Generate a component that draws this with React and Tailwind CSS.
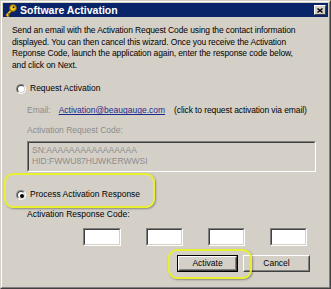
import React from "react";

const font = { fontFamily: '"Liberation Sans", Arial, sans-serif' };

function Radio({ checked }) {
  return (
    <span className="relative inline-block w-[10px] h-[10px] rounded-full bg-white border border-t-[#808080] border-l-[#808080] border-r-[#ffffff] border-b-[#ffffff] shrink-0">
      <span className="absolute inset-0 rounded-full border border-t-[#404040] border-l-[#404040] border-r-[#d4d0c8] border-b-[#d4d0c8]" />
      {checked && (
        <span className="absolute left-[3px] top-[3px] w-[4px] h-[4px] rounded-full bg-black" />
      )}
    </span>
  );
}

function Sunken({ className = "", children }) {
  return (
    <div className={"border border-t-[#808080] border-l-[#808080] border-r-white border-b-white " + className}>
      <div className="w-full h-full border border-t-[#404040] border-l-[#404040] border-r-[#d4d0c8] border-b-[#d4d0c8]">
        {children}
      </div>
    </div>
  );
}

function Button({ children, def, className = "" }) {
  const inner = (
    <div className="w-full h-full border border-t-white border-l-white border-r-[#404040] border-b-[#404040]">
      <div className="w-full h-full border border-t-[#d4d0c8] border-l-[#d4d0c8] border-r-[#808080] border-b-[#808080] flex items-center justify-center text-[8.5px] text-black">
        {children}
      </div>
    </div>
  );
  return def ? (
    <div className={"border border-black " + className}>{inner}</div>
  ) : (
    <div className={className}>{inner}</div>
  );
}

function KeyIcon() {
  return (
    <svg width="12" height="13" viewBox="0 0 12 13">
      <path d="M3 12 L2 11 L6 6.5" stroke="#7a5a00" strokeWidth="2.6" fill="none" strokeLinecap="round" />
      <path d="M3 12 L2 11 L6 6.5" stroke="#f2c21c" strokeWidth="1.4" fill="none" strokeLinecap="round" />
      <path d="M3.2 9.6 L4.6 10.8" stroke="#7a5a00" strokeWidth="1.2" />
      <circle cx="8" cy="4" r="3.4" fill="#f6c61e" stroke="#7a5a00" strokeWidth="1" />
      <circle cx="8.6" cy="3.3" r="1" fill="#0a246a" />
    </svg>
  );
}

export default function App() {
  return (
    <div style={font} className="w-[331px] h-[289px] bg-[#d4d0c8] border border-t-[#d4d0c8] border-l-[#d4d0c8] border-r-[#404040] border-b-[#404040] relative overflow-hidden">
      <div className="w-full h-full border border-t-white border-l-white border-r-[#808080] border-b-[#808080] p-[1px]">
        {/* Title bar */}
        <div className="h-[14px] bg-[#0a246a] flex items-center pl-[2px] pr-[2px]">
          <KeyIcon />
          <span className="ml-[3px] text-white font-bold text-[10.5px] leading-none">Software Activation</span>
          <div className="ml-auto w-[12px] h-[10px] bg-[#d4d0c8] border border-t-white border-l-white border-r-[#404040] border-b-[#404040] flex items-center justify-center">
            <svg width="6" height="5" viewBox="0 0 6 5">
              <path d="M0.5 0.5 L5.5 4.5 M5.5 0.5 L0.5 4.5" stroke="#000" strokeWidth="1.4" />
            </svg>
          </div>
        </div>

        {/* Body */}
        <div className="pl-[9px] pr-[8px]">
          <p className="mt-[8px] text-[8.5px] leading-[11.7px] tracking-[-0.12px] text-black whitespace-nowrap">
            Send an email with the Activation Request Code using the contact information
            <br />
            displayed. You can then cancel this wizard. Once you receive the Activation
            <br />
            Reponse Code, launch the application again, enter the response code below,
            <br />
            and click on Next.
          </p>

          <div className="mt-[11px] h-[12px] flex items-center pl-[4px]">
            <Radio />
            <span className="ml-[4px] text-[8.5px] text-black">Request Activation</span>
          </div>

          <div className="mt-[10px] h-[12px] flex items-center pl-[15px] text-[8.5px] whitespace-nowrap">
            <span className="text-[#8c8c8c]">Email:</span>
            <span className="ml-[8px] text-[#1c2a8c] underline">Activation@beaugauge.com</span>
            <span className="ml-[9px] text-black tracking-[-0.1px]">(click to request activation via email)</span>
          </div>

          <div className="mt-[8px] h-[12px] flex items-center pl-[15px] text-[8.5px] text-[#8c8c8c]">
            Activation Request Code:
          </div>

          <div className="mt-[4px] ml-[15px] mr-[4px]">
            <Sunken className="h-[31px]">
              <div className="pl-[3px] pt-[2px] text-[8.5px] leading-[11px] text-[#8c8c8c]">
                <div>SN:AAAAAAAAAAAAAAAA</div>
                <div>HID:FWWU87HUWKERWWSI</div>
              </div>
            </Sunken>
          </div>

          <div className="mt-[17px] h-[12px] flex items-center pl-[4px]">
            <Radio checked />
            <span className="ml-[4px] text-[8.5px] text-black">Process Activation Response</span>
          </div>

          <div className="mt-[8px] h-[12px] flex items-center pl-[15px] text-[8.5px] text-black">
            Activation Response Code:
          </div>

          <div className="mt-[7px] flex pl-[71px] gap-[25px]">
            <Sunken className="w-[38px] h-[18px] bg-white" />
            <Sunken className="w-[37px] h-[18px] bg-white" />
            <Sunken className="w-[37px] h-[18px] bg-white" />
            <Sunken className="w-[37px] h-[18px] bg-white" />
          </div>

          <div className="mt-[9px] flex pl-[165px] gap-[5px]">
            <Button def className="w-[61px] h-[17px]">Activate</Button>
            <Button className="w-[67px] h-[17px]">Cancel</Button>
          </div>
        </div>
      </div>

      {/* Yellow annotation highlights */}
      <div className="absolute left-[3px] top-[172px] w-[151px] h-[35px] rounded-[9px] border-2 border-[#e8f030] shadow-[1px_1px_2px_rgba(0,0,0,0.35)]" />
      <div className="absolute left-[167px] top-[248px] w-[84px] h-[30px] rounded-[9px] border-2 border-[#e8f030] shadow-[1px_1px_2px_rgba(0,0,0,0.35)]" />
    </div>
  );
}
